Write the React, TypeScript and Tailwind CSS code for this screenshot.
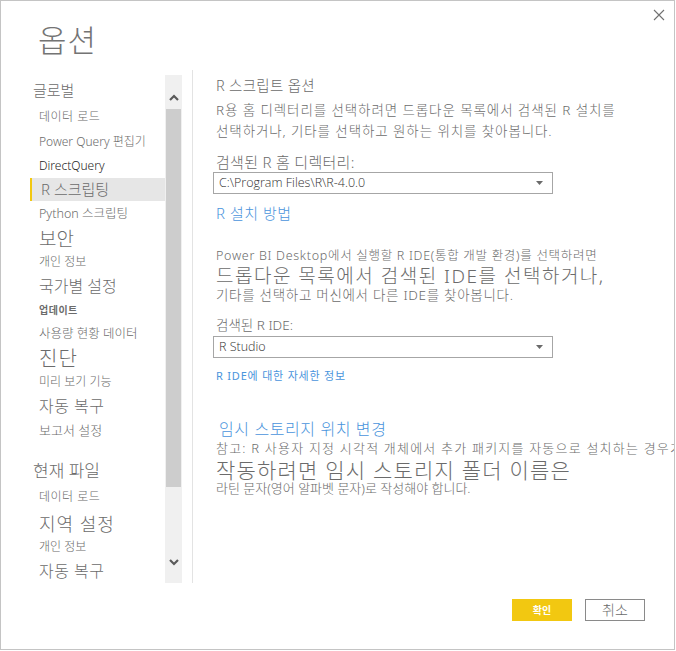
import React from "react";

type Item = {
  t: string;
  cls: string;
  h: string;
  head?: boolean;
  sel?: boolean;
};

const items: Item[] = [
  { t: "글로벌", cls: "text-[15px]", h: "h-[27px]", head: true },
  { t: "데이터 로드", cls: "text-[12px] tracking-[0.5px]", h: "h-[26px]" },
  { t: "Power Query 편집기", cls: "text-[12px]", h: "h-[24px]" },
  { t: "DirectQuery", cls: "text-[12px] text-[#252423]", h: "h-[24px]" },
  { t: "R 스크립팅", cls: "text-[15px]", h: "h-[23px]", sel: true },
  { t: "Python 스크립팅", cls: "text-[12.5px]", h: "h-[26px]" },
  { t: "보안", cls: "text-[19px]", h: "h-[24px]" },
  { t: "개인 정보", cls: "text-[12px]", h: "h-[22px]" },
  { t: "국가별 설정", cls: "text-[16px]", h: "h-[25px]" },
  { t: "업데이트", cls: "text-[10px] font-bold tracking-[0.5px]", h: "h-[23px]" },
  { t: "사용량 현황 데이터", cls: "text-[12.5px]", h: "h-[26px]" },
  { t: "진단", cls: "text-[20px] tracking-[1px]", h: "h-[24px]" },
  { t: "미리 보기 기능", cls: "text-[12px]", h: "h-[22px]" },
  { t: "자동 복구", cls: "text-[16px] tracking-[0.5px]", h: "h-[26px]" },
  { t: "보고서 설정", cls: "text-[13px]", h: "h-[22px]" },
];

const items2: Item[] = [
  { t: "현재 파일", cls: "text-[17px]", h: "h-[26px]", head: true },
  { t: "데이터 로드", cls: "text-[12px] tracking-[0.5px]", h: "h-[28px]" },
  { t: "지역 설정", cls: "text-[18px] tracking-[1px]", h: "h-[25px]" },
  { t: "개인 정보", cls: "text-[12px]", h: "h-[22px]" },
  { t: "자동 복구", cls: "text-[16px] tracking-[0.5px]", h: "h-[26px]" },
];

function NavItem({ it }: { it: Item }) {
  return (
    <div
      className={`${it.h} shrink-0 flex items-center whitespace-nowrap leading-none ${
        it.head ? "pl-[3px]" : "pl-[9px]"
      } ${it.sel ? "bg-[#e6e6e6] border-l-2 border-[#f2c811] pl-[7px]" : ""} ${it.cls}`}
    >
      {it.t}
    </div>
  );
}

function Dropdown({ value }: { value: string }) {
  return (
    <div className="w-[340px] h-[22px] border border-[#a6a6a6] flex items-center justify-between pl-[5px] pr-[9px] bg-white">
      <span
        className="text-[12.5px] text-[#333] leading-none"
        style={{ fontFamily: '"Open Sans", "Noto Sans CJK KR", sans-serif' }}
      >
        {value}
      </span>
      <svg width="7" height="4" viewBox="0 0 7 4">
        <path d="M0 0 L7 0 L3.5 4 Z" fill="#6a6a6a" />
      </svg>
    </div>
  );
}

export default function App() {
  return (
    <div
      className="w-[675px] h-[650px] border border-[#c4c4c4] bg-white relative flex flex-col text-[#6b6b6b] overflow-hidden"
      style={{ fontFamily: '"Noto Sans", "Noto Sans CJK KR", sans-serif' }}
    >
      {/* header */}
      <div className="h-[69px] shrink-0 pl-[37px] pt-[19px]">
        <div className="text-[31px] leading-[40px] text-[#747474] font-light tracking-[1px]">옵션</div>
      </div>
      <button className="absolute top-[7px] right-[8px] w-[14px] h-[14px] flex items-center justify-center">
        <svg width="12" height="12" viewBox="0 0 12 12">
          <path d="M1 1 L11 11 M11 1 L1 11" stroke="#707070" strokeWidth="1.1" />
        </svg>
      </button>

      {/* body */}
      <div className="h-[513px] shrink-0 flex">
        {/* sidebar */}
        <div className="w-[191px] shrink-0 flex pt-[5px] pl-[29px]">
          <div className="w-[135px] shrink-0 flex flex-col overflow-hidden pt-[2px] font-light">
            {items.map((it, i) => (
              <NavItem key={i} it={it} />
            ))}
            <div className="h-[16px] shrink-0" />
            {items2.map((it, i) => (
              <NavItem key={"b" + i} it={it} />
            ))}
          </div>
          <div className="w-[17px] shrink-0 bg-[#f0f0f0] flex flex-col">
            <div className="h-[34px] shrink-0 flex items-center justify-center pt-[10px]">
              <svg width="10" height="7" viewBox="0 0 10 7">
                <path d="M1 6 L5 2 L9 6" stroke="#5a5a5a" strokeWidth="2.2" fill="none" />
              </svg>
            </div>
            <div className="h-[378px] shrink-0 mx-[1px] bg-[#cdcdcd]" />
            <div className="flex-1 flex flex-col items-center justify-end pb-[17px]">
              <svg width="10" height="7" viewBox="0 0 10 7">
                <path d="M1 1 L5 5 L9 1" stroke="#5a5a5a" strokeWidth="2.2" fill="none" />
              </svg>
            </div>
          </div>
        </div>
        <div className="w-px shrink-0 bg-[#e3e3e3]" />

        {/* content */}
        <div className="flex-1 pl-[23px] flex flex-col overflow-hidden whitespace-nowrap font-light">
          <div className="mt-[5px] text-[14.5px] leading-[20px] tracking-[0.3px]">R 스크립트 옵션</div>
          <div className="mt-[5px] text-[13.5px] leading-[21px] tracking-[0.9px]">
            <div>R용 홈 디렉터리를 선택하려면 드롭다운 목록에서 검색된 R 설치를</div>
            <div>선택하거나, 기타를 선택하고 원하는 위치를 찾아봅니다.</div>
          </div>
          <div className="mt-[10px] text-[15px] leading-[20px] tracking-[0.3px]">검색된 R 홈 디렉터리:</div>
          <div className="-ml-[3px]">
            <Dropdown value="C:\Program Files\R\R-4.0.0" />
          </div>
          <div className="mt-[9px] text-[15px] leading-[20px] text-[#4a94dc] tracking-[0.5px]">R 설치 방법</div>
          <div className="mt-[24px] text-[12.5px] leading-[18px] tracking-[0.7px]">
            Power BI Desktop에서 실행할 R IDE(통합 개발 환경)를 선택하려면
          </div>
          <div className="text-[19px] leading-[22px] tracking-[1.5px]">드롭다운 목록에서 검색된 IDE를 선택하거나,</div>
          <div className="mt-[1px] text-[13.5px] leading-[14px] tracking-[0.7px]">기타를 선택하고 머신에서 다른 IDE를 찾아봅니다.</div>
          <div className="mt-[14px] text-[13.5px] leading-[18px]">검색된 R IDE:</div>
          <div className="mt-[2px] -ml-[3px]">
            <Dropdown value="R Studio" />
          </div>
          <div className="mt-[10px] text-[11px] leading-[16px] text-[#4a94dc] tracking-[0.8px] font-normal">
            R IDE에 대한 자세한 정보
          </div>
          <div className="mt-[34px] ml-[3px] text-[16px] leading-[22px] text-[#4a94dc] tracking-[0.6px]">
            임시 스토리지 위치 변경
          </div>
          <div className="text-[13px] leading-[16px] tracking-[1.2px]">
            참고: R 사용자 지정 시각적 개체에서 추가 패키지를 자동으로 설치하는 경우가
          </div>
          <div className="mt-[2px] text-[21px] leading-[24px] tracking-[1.2px]">작동하려면 임시 스토리지 폴더 이름은</div>
          <div className="mt-[-1px] text-[13px] leading-[14px]">라틴 문자(영어 알파벳 문자)로 작성해야 합니다.</div>
        </div>
      </div>

      {/* footer */}
      <div className="flex-1 flex justify-end items-start pt-[16px] pr-[29px] gap-[13px]">
        <button className="w-[60px] h-[22px] bg-[#f2c811] text-white text-[10px] font-bold flex items-center justify-center leading-none">
          확인
        </button>
        <button className="w-[60px] h-[22px] border border-[#8a8a8a] bg-white text-[#6b6b6b] text-[14px] font-light flex items-center justify-center leading-none">
          취소
        </button>
      </div>
    </div>
  );
}
